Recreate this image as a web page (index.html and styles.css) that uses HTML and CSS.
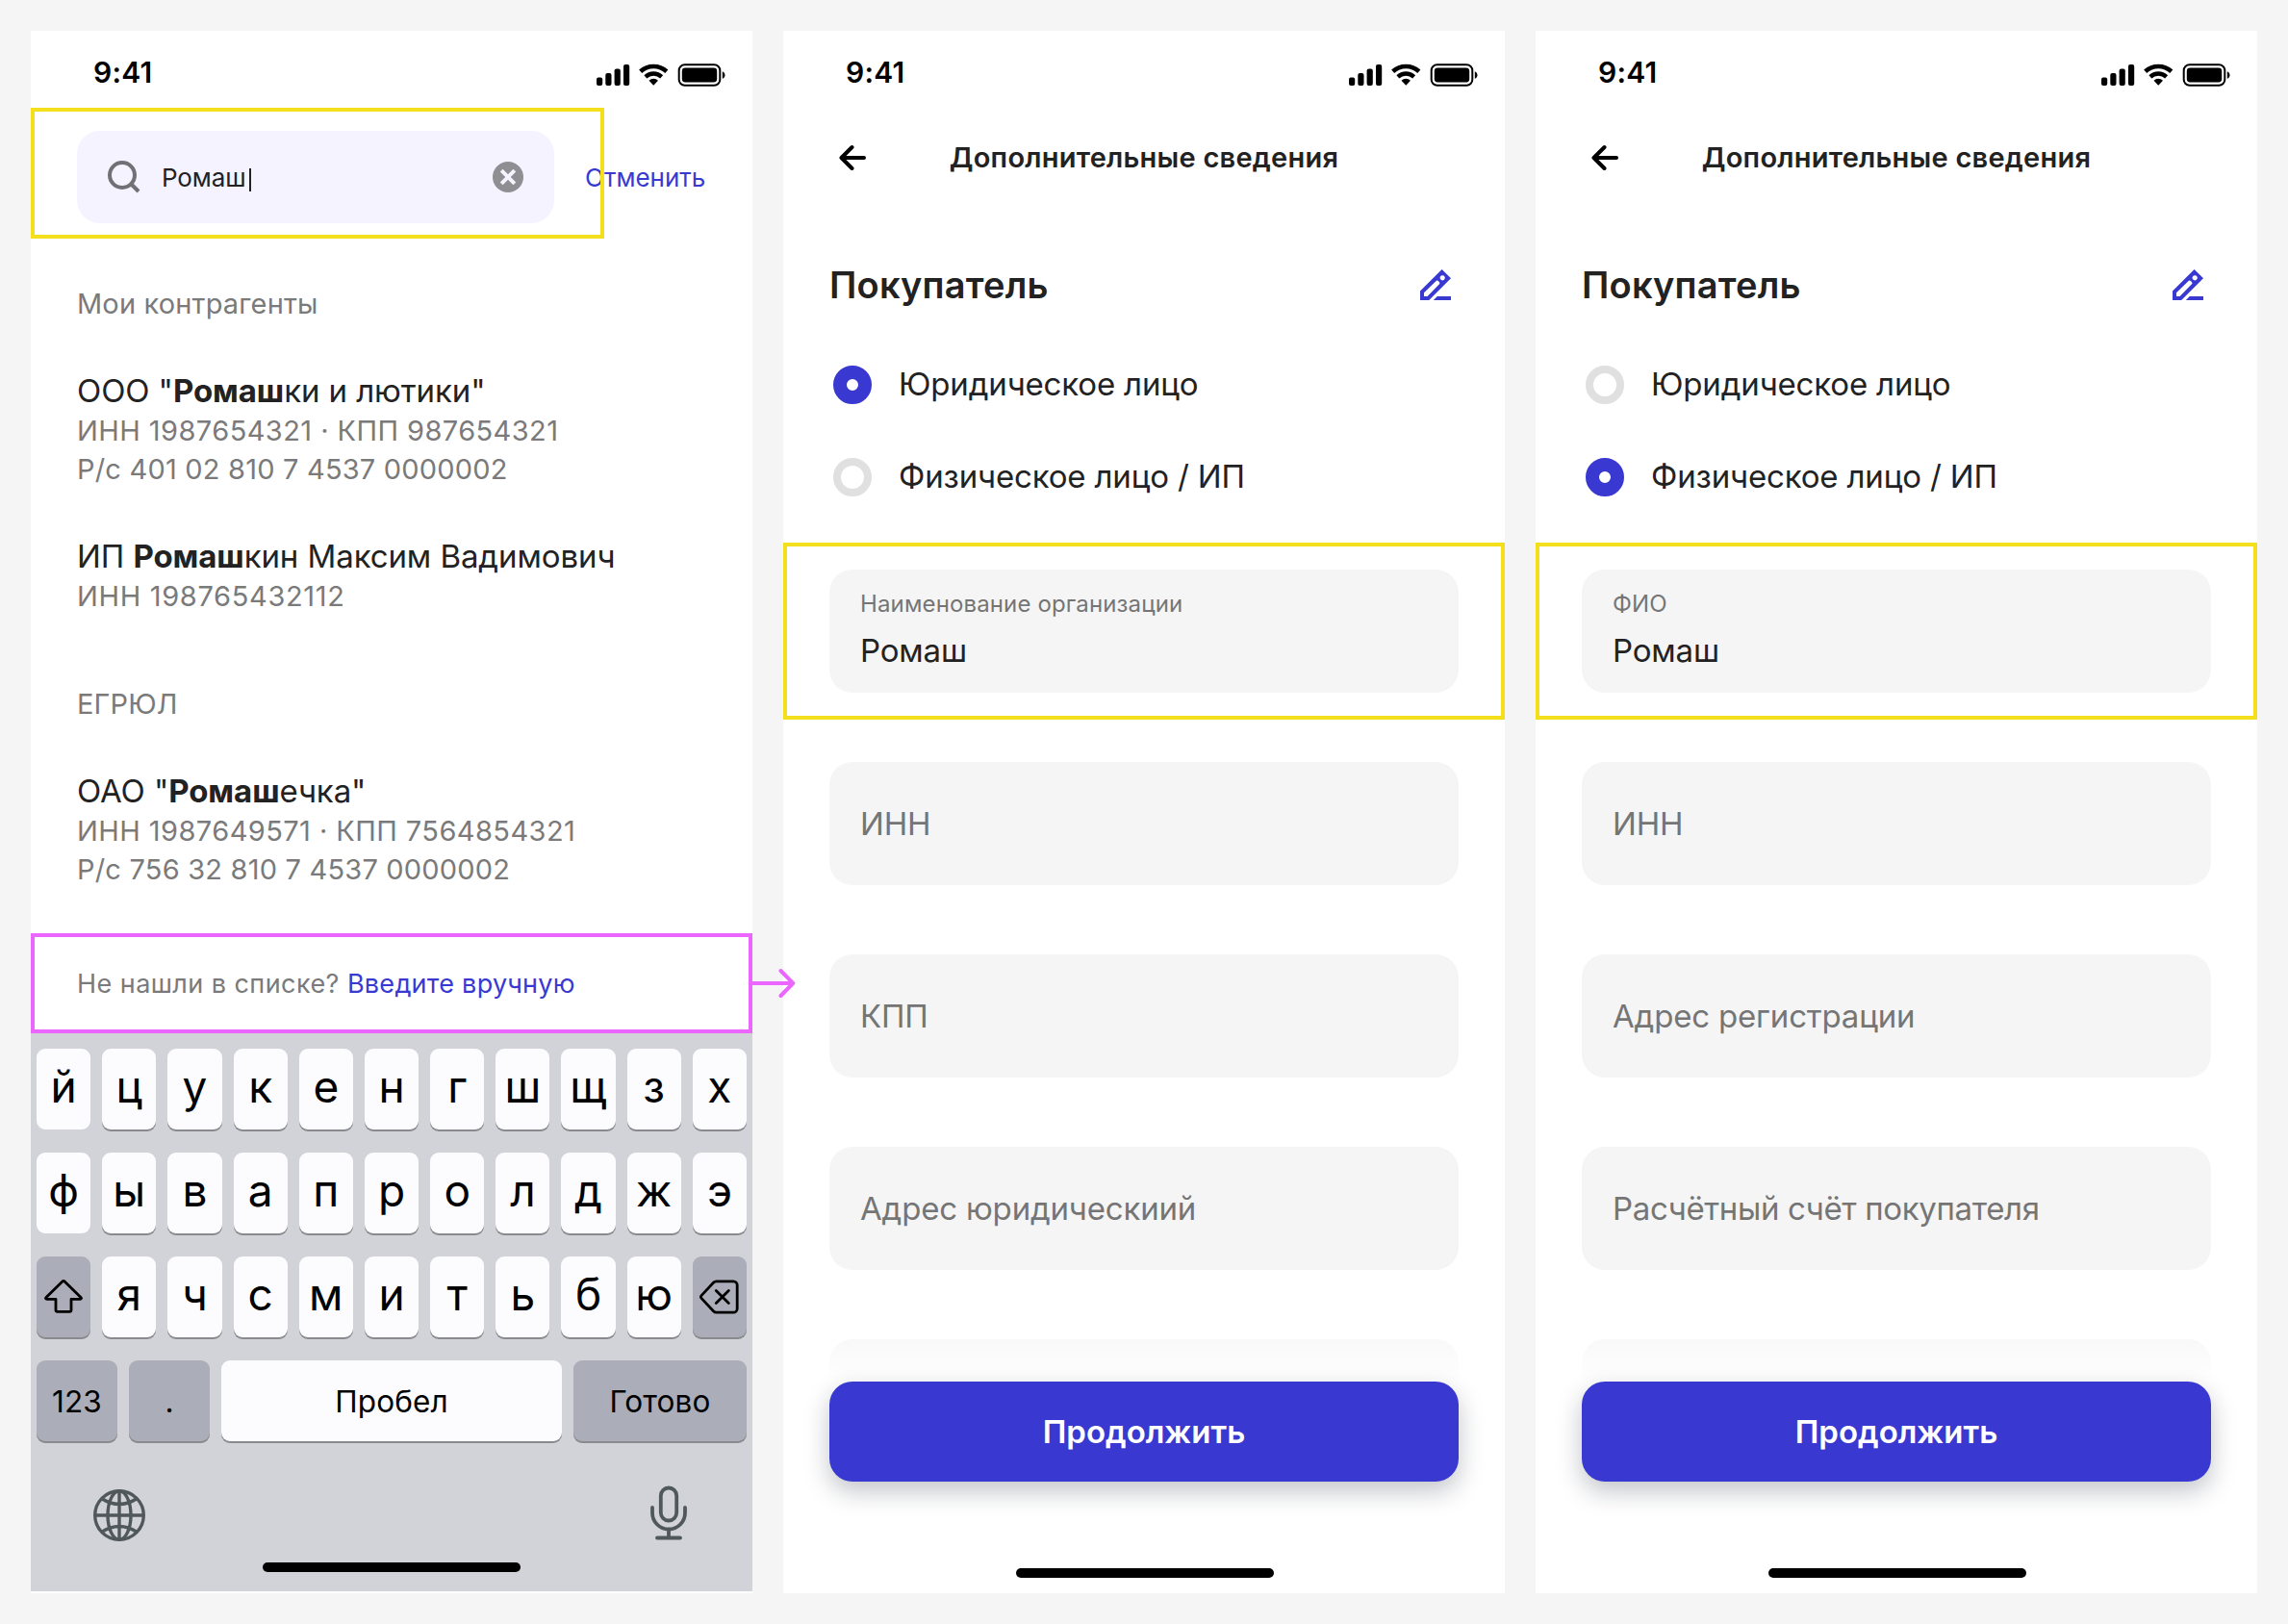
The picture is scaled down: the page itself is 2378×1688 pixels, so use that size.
FILE: index.html
```html
<!DOCTYPE html>
<html lang="ru">
<head>
<meta charset="utf-8">
<title>Дополнительные сведения</title>
<link rel="stylesheet" href="styles.css">
</head>
<body>
<svg class="sprite" width="0" height="0" aria-hidden="true">
  <symbol id="status" viewBox="0 0 134 24">
    <rect x="0" y="14.5" width="6.2" height="8.5" rx="2"/>
    <rect x="9.3" y="10" width="6.2" height="13" rx="2"/>
    <rect x="18.6" y="5.5" width="6.2" height="17.5" rx="2"/>
    <rect x="28" y="1" width="6.2" height="22" rx="2"/>
    <g transform="translate(44 .3)">
      <path d="M1.68 7.95A19.9 19.9 0 0 1 28.82 7.95" fill="none" stroke="#000" stroke-width="4.5"/>
      <path d="M6.86 13.51A12.3 12.3 0 0 1 23.64 13.51" fill="none" stroke="#000" stroke-width="4.3"/>
      <path d="M10.48 17.4A7 7 0 0 1 20.02 17.4L15.25 22.5Z"/>
    </g>
    <rect x="85.7" y="1.3" width="42.6" height="21.4" rx="6" fill="none" stroke="#000" stroke-width="2"/>
    <rect x="88.8" y="4.5" width="36.4" height="15" rx="3.4"/>
    <path d="M130.8 8.2c3.6 1.4 3.6 6.2 0 7.6z"/>
  </symbol>
  <symbol id="back" viewBox="0 0 28 28">
    <path d="M13.5 3 2.5 14l11 11M3 14h23" fill="none" stroke="#000" stroke-width="4" stroke-linecap="round" stroke-linejoin="round"/>
  </symbol>
  <symbol id="pencil" viewBox="0 0 32 32">
    <path fill-rule="evenodd" d="M22.6 0 32 9.2 9.2 32H0v-9.4zM4 24.3V28h3.6L19.8 15.6a1.8 1.8 0 0 0 0-2.6l-.8-.8a1.8 1.8 0 0 0-2.6 0zM23.2 6.2a2.6 2.6 0 1 0 .01 0z"/>
    <path d="M13.8 32l4-4H32v4z"/>
  </symbol>
</svg>

<main class="board">
  <section class="phone phone-search">
    <header class="statusbar"><span class="time">9:41</span><svg class="status-icons"><use href="#status"/></svg></header>
    <div class="search-row">
      <div class="search-field">
        <svg class="search-icon" viewBox="0 0 34 34"><path d="M24 24l8 8" stroke="#707075" stroke-width="4"/><circle cx="15" cy="15" r="13" fill="none" stroke="#707075" stroke-width="4"/></svg>
        <span class="query">Ромаш</span><i class="caret"></i>
        <svg class="clear-icon" viewBox="0 0 32 32"><circle cx="16" cy="16" r="16" fill="#8e8e93"/><path d="M9.2 9.2l13.6 13.6M22.8 9.2L9.2 22.8" stroke="#f4f3ff" stroke-width="4"/></svg>
      </div>
      <a class="cancel">Отменить</a>
      <div class="mark mark-search"></div>
    </div>
    <div class="results">
      <h2 class="group">Мои контрагенты</h2>
      <article class="item">
        <h3>ООО "<b>Ромаш</b>ки и лютики"</h3>
        <p class="tax">ИНН 1987654321 · КПП 987654321</p>
        <p>Р/с 401 02 810 7 4537 0000002</p>
      </article>
      <article class="item">
        <h3>ИП <b>Ромаш</b>кин Максим Вадимович</h3>
        <p class="tax-personal">ИНН 198765432112</p>
      </article>
      <h2 class="group">ЕГРЮЛ</h2>
      <article class="item">
        <h3>ОАО "<b>Ромаш</b>ечка"</h3>
        <p class="tax">ИНН 1987649571 · КПП 7564854321</p>
        <p>Р/с 756 32 810 7 4537 0000002</p>
      </article>
    </div>
    <div class="manual">
      <span>Не нашли в списке?</span> <a>Введите вручную</a>
      <svg class="flow-arrow" viewBox="0 0 46 34"><path d="M0 17h42M30.5 4l12.7 13-12.7 13" fill="none" stroke="#eb66ff" stroke-width="4" stroke-linecap="round" stroke-linejoin="round"/></svg>
    </div>
    <div class="keyboard">
      <div class="keys">
        <span class="key flat">й</span><span class="key">ц</span><span class="key">у</span><span class="key">к</span><span class="key">е</span><span class="key">н</span><span class="key">г</span><span class="key">ш</span><span class="key">щ</span><span class="key">з</span><span class="key">х</span>
        <span class="key flat">ф</span><span class="key">ы</span><span class="key">в</span><span class="key">а</span><span class="key">п</span><span class="key">р</span><span class="key">о</span><span class="key">л</span><span class="key">д</span><span class="key">ж</span><span class="key">э</span>
        <span class="key dark"><svg class="shift-icon" viewBox="0 0 40 36"><path d="M18.6 2.2a2 2 0 0 1 2.8 0L38 18.4c.9.9.5 1.9-.8 1.9H28v11.2c0 1.2-.7 1.9-1.900 1.900H13.900c-1.200 0-1.900-.7-1.900-1.900V20.300H2.800c-1.300 0-1.700-1-.8-1.900z" fill="none" stroke="#000" stroke-width="2.800" stroke-linejoin="round"/></svg></span><span class="key">я</span><span class="key">ч</span><span class="key">с</span><span class="key">м</span><span class="key">и</span><span class="key">т</span><span class="key">ь</span><span class="key">б</span><span class="key">ю</span><span class="key dark"><svg class="delete-icon" viewBox="0 0 41 36"><path d="M17.5 1.8H35.2a4 4 0 0 1 4 4V30.2a4 4 0 0 1-4 4H17.5a4 4 0 0 1-2.8-1.2L2.2 19.6a2.3 2.3 0 0 1 0-3.2L14.7 3a4 4 0 0 1 2.8-1.2zM17.3 11.6l13 13M30.3 11.6l-13 13" fill="none" stroke="#000" stroke-width="2.8" stroke-linecap="round" stroke-linejoin="round"/></svg></span>
      </div>
      <div class="bottom-keys">
        <span class="key dark">123</span><span class="key dark">.</span><span class="key">Пробел</span><span class="key dark">Готово</span>
      </div>
      <div class="tools">
        <svg class="globe-icon" viewBox="0 0 54 54"><g fill="none" stroke="#51585c" stroke-width="3.4"><circle cx="27" cy="27" r="25.3"/><ellipse cx="27" cy="27" rx="12" ry="25.3"/><path d="M27 1.5v51M1.5 27h51M8.5 9.5q18.5 12 37 0M8.5 44.5q18.5-12 37 0"/></g></svg>
        <svg class="mic-icon" viewBox="0 0 38 56"><g fill="none" stroke="#51585c" stroke-width="3.8" stroke-linecap="round"><rect x="10.8" y="2" width="16.4" height="34" rx="8.2"/><path d="M2 22.5v5.5a17 17 0 0 0 34 0v-5.5M19 45v9M7 54h24"/></g></svg>
      </div>
      <div class="home"></div>
    </div>
  </section>

  <section class="phone">
    <header class="statusbar"><span class="time">9:41</span><svg class="status-icons"><use href="#status"/></svg></header>
    <nav class="nav"><svg class="back"><use href="#back"/></svg><h1>Дополнительные сведения</h1></nav>
    <div class="heading"><h2>Покупатель</h2><svg class="pencil"><use href="#pencil"/></svg></div>
    <div class="radios">
      <label class="option"><i class="radio on"></i><span>Юридическое лицо</span></label>
      <label class="option"><i class="radio"></i><span>Физическое лицо / ИП</span></label>
    </div>
    <div class="fields">
      <div class="field filled"><small>Наименование организации</small><span>Ромаш</span><div class="mark mark-field"></div></div>
      <div class="field">ИНН</div>
      <div class="field">КПП</div>
      <div class="field">Адрес юридическиий</div>
      <div class="field"></div>
    </div>
    <footer class="footer"><a class="submit">Продолжить</a><div class="home"></div></footer>
  </section>

  <section class="phone">
    <header class="statusbar"><span class="time">9:41</span><svg class="status-icons"><use href="#status"/></svg></header>
    <nav class="nav"><svg class="back"><use href="#back"/></svg><h1>Дополнительные сведения</h1></nav>
    <div class="heading"><h2>Покупатель</h2><svg class="pencil"><use href="#pencil"/></svg></div>
    <div class="radios">
      <label class="option"><i class="radio"></i><span>Юридическое лицо</span></label>
      <label class="option"><i class="radio on"></i><span>Физическое лицо / ИП</span></label>
    </div>
    <div class="fields">
      <div class="field filled"><small>ФИО</small><span>Ромаш</span><div class="mark mark-field"></div></div>
      <div class="field">ИНН</div>
      <div class="field">Адрес регистрации</div>
      <div class="field long">Расчётный счёт покупателя</div>
      <div class="field"></div>
    </div>
    <footer class="footer"><a class="submit">Продолжить</a><div class="home"></div></footer>
  </section>
</main>
</body>
</html>
```
FILE: styles.css
```css
* { box-sizing: border-box; margin: 0; padding: 0; }
body {
  background: #f5f5f5;
  color: #222;
  font-family: Inter, "Liberation Sans", sans-serif;
}
svg { display: block; flex: none; }
.sprite { position: absolute; }

.board { display: flex; gap: 32px; padding: 32px; height: 1688px; }
.phone {
  position: relative;
  width: 750px;
  height: 1624px;
  flex: none;
  display: flex;
  flex-direction: column;
  background: #fff;
  overflow: hidden;
}
.phone-search { overflow: visible; z-index: 1; }

.statusbar {
  height: 80px;
  flex: none;
  display: flex;
  justify-content: space-between;
  padding: 0 28px 0 65px;
  color: #000;
}
.time { font-size: 30px; font-weight: 600; line-height: 87px; letter-spacing: 0.2px; }
.status-icons { width: 134px; height: 24px; margin-top: 34px; }

.mark { position: absolute; border: 4px solid #f3df1c; pointer-events: none; }

/* search */
.search-row {
  position: relative;
  height: 136px;
  flex: none;
  display: flex;
  align-items: flex-start;
  padding: 16px 48px 0;
}
.mark-search { inset: 0 154px 0 0; }
.search-field {
  width: 496px;
  height: 96px;
  margin-top: 8px;
  display: flex;
  align-items: center;
  padding: 0 32px;
  border-radius: 24px;
  background: #f4f3ff;
}
.search-icon { width: 34px; height: 34px; }
.query { margin: 2px 0 0 22px; font-size: 26px; line-height: 40px; letter-spacing: -0.1px; }
.caret { width: 2px; height: 24px; margin: 6px 0 0 3px; background: #222; }
.clear-icon { width: 32px; height: 32px; margin-left: auto; }
.cancel { margin: 8px 0 0 32px; font-size: 26px; line-height: 98px; color: #3939d1; }

.results { flex: 1; padding: 48px 48px 0; }
.group { font-size: 29px; font-weight: 400; line-height: 40px; letter-spacing: 0.15px; color: #7a7a7a; }
.item { padding-top: 48px; }
.item + .group { margin-top: 72px; }
.item h3 { font-size: 33px; font-weight: 400; line-height: 44px; letter-spacing: -0.09px; white-space: nowrap; }
.item b { font-weight: 700; }
.item p { font-size: 29px; line-height: 40px; letter-spacing: 0.2px; color: #7a7a7a; white-space: nowrap; }
.item .tax { letter-spacing: 0.43px; }
.item .tax-personal { letter-spacing: 0.66px; }

.manual {
  position: relative;
  height: 104px;
  flex: none;
  padding-left: 44px;
  border: 4px solid #eb66ff;
  font-size: 27px;
  line-height: 98px;
  letter-spacing: 0.44px;
  color: #7a7a7a;
}
.manual a { letter-spacing: 0.27px; color: #3939d1; }
.flow-arrow { position: absolute; left: 745px; top: 31px; width: 46px; height: 34px; }

/* keyboard */
.keyboard {
  height: 580px;
  flex: none;
  margin-bottom: 2px;
  padding: 16px 6px 0;
  background: #d1d3d9;
  color: #000;
}
.keys { display: grid; grid-template-columns: repeat(11, 1fr); grid-auto-rows: 84px; gap: 24px 12px; }
.bottom-keys { display: grid; grid-template-columns: 84px 84px 354px 180px; gap: 12px; margin-top: 24px; }
.key {
  height: 84px;
  min-width: 0;
  display: flex;
  align-items: center;
  justify-content: center;
  border-radius: 9px;
  background: #fcfcfe;
  box-shadow: 0 2px 0 #898a8d;
  font-size: 46px;
  line-height: 80px;
  padding-bottom: 6px;
}
.flat { box-shadow: none; }
.dark { background: #abadb9; padding-bottom: 0; }
.bottom-keys .key { font-size: 31.5px; padding: 1px 0 0; letter-spacing: 0.1px; }
.shift-icon { width: 40px; height: 36px; }
.delete-icon { width: 41px; height: 36px; margin-right: 1px; }
.tools { display: flex; justify-content: space-between; padding: 46px 62px 0 59px; }
.globe-icon { width: 54px; height: 54px; margin-top: 4px; }
.mic-icon { width: 38px; height: 57px; }
.home { width: 268px; height: 10px; border-radius: 5px; background: #000; }
.keyboard .home { margin: 22px auto 0; }

/* form */
.nav { position: relative; height: 104px; flex: none; display: flex; align-items: center; justify-content: center; }
.nav h1 { font-size: 29px; font-weight: 600; line-height: 40px; letter-spacing: 0.24px; }
.back { position: absolute; left: 58px; top: 38px; width: 28px; height: 28px; }
.heading { height: 160px; flex: none; display: flex; align-items: center; justify-content: space-between; padding: 0 56px 0 48px; }
.heading h2 { font-size: 38px; font-weight: 600; letter-spacing: 0.22px; }
.pencil { width: 32px; height: 32px; fill: #3939d1; }
.radios { margin-top: -24px; }
.option { height: 96px; display: flex; align-items: center; gap: 28px; padding-left: 52px; font-size: 33px; letter-spacing: -0.16px; }
.option span { margin-bottom: 3px; }
.radio { width: 40px; height: 40px; border: 8px solid #e0e0e0; border-radius: 50%; }
.radio.on { border: 14px solid #3939d1; }
.fields { display: flex; flex-direction: column; gap: 72px; padding: 48px 48px 0; }
.field {
  position: relative;
  height: 128px;
  flex: none;
  padding: 0 32px;
  border-radius: 24px;
  background: #f5f5f5;
  font-size: 33px;
  line-height: 128px;
  letter-spacing: -0.18px;
  color: #757575;
}
.long { letter-spacing: -0.36px; }
.filled { display: flex; flex-direction: column; padding-top: 20px; }
.filled small { font-size: 24px; line-height: 32px; letter-spacing: 0.13px; }
.filled span { line-height: 64px; color: #222; }
.mark-field { inset: -28px -48px; }
.footer {
  position: absolute;
  inset: auto 0 0;
  height: 300px;
  padding: 80px 48px 0;
  background: linear-gradient(rgba(255, 255, 255, 0) 8px, #fff 80px);
}
.submit {
  display: block;
  height: 104px;
  border-radius: 24px;
  background: #3939d1;
  box-shadow: 0 10px 26px rgba(20, 28, 45, .26);
  color: #fff;
  font-size: 33px;
  font-weight: 600;
  line-height: 104px;
  text-align: center;
}
.footer .home { margin: 90px 0 0 194px; }
```
